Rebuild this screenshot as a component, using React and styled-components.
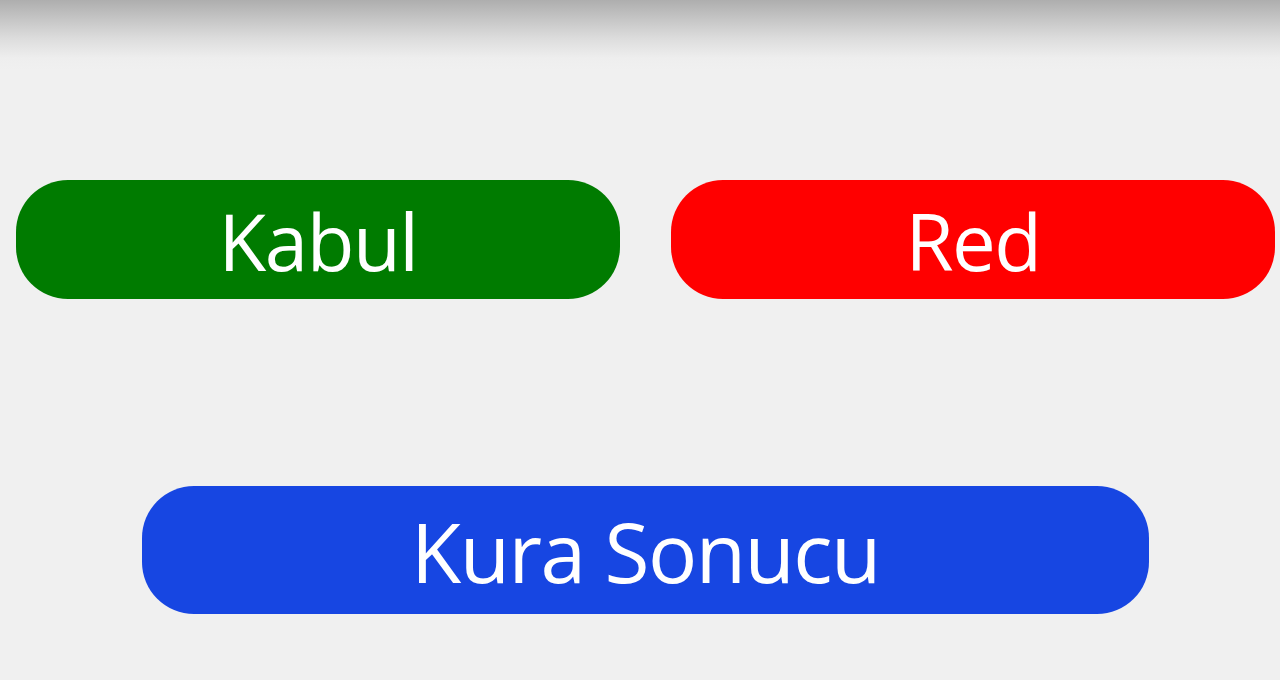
import React from "react";
import styled, { createGlobalStyle } from "styled-components";

const GlobalStyle = createGlobalStyle`
  html, body {
    margin: 0;
    padding: 0;
    background: #f0f0f0;
  }
  body {
    font-family: "Open Sans", "Noto Sans", sans-serif;
  }
`;

const Page = styled.div`
  height: 680px;
  box-sizing: border-box;
  padding: 180px 5px 0 16px;
  display: flex;
  flex-direction: column;
  align-items: center;
  gap: 187px;
  background: linear-gradient(
    to bottom,
    #aeaeae 0px,
    #c4c4c4 18px,
    #dcdcdc 38px,
    #eeeeee 58px,
    #f0f0f0 70px
  );
`;

const Row = styled.div`
  display: flex;
  width: 100%;
  gap: 51px;
`;

const PillButton = styled.button`
  flex: ${(p) => (p.$wide ? "none" : "1 1 0")};
  width: ${(p) => (p.$wide ? "1007px" : "auto")};
  height: ${(p) => (p.$wide ? "128px" : "119px")};
  border: none;
  border-radius: 52px;
  background: ${(p) => p.$color};
  color: #ffffff;
  font-family: "Open Sans", "Noto Sans", sans-serif;
  font-size: ${(p) => (p.$wide ? "82px" : "78px")};
  font-weight: 400;
  letter-spacing: -1.5px;
  line-height: 1;
  display: flex;
  align-items: center;
  justify-content: center;
  padding: 2px 0 0;
  cursor: pointer;
`;

const App = () => {
  return (
    <>
      <GlobalStyle />
      <Page>
        <Row>
          <PillButton $color="#007b00">Kabul</PillButton>
          <PillButton $color="#ff0000">Red</PillButton>
        </Row>
        <PillButton $wide $color="#1746e2">
          Kura Sonucu
        </PillButton>
      </Page>
    </>
  );
};

export default App;
